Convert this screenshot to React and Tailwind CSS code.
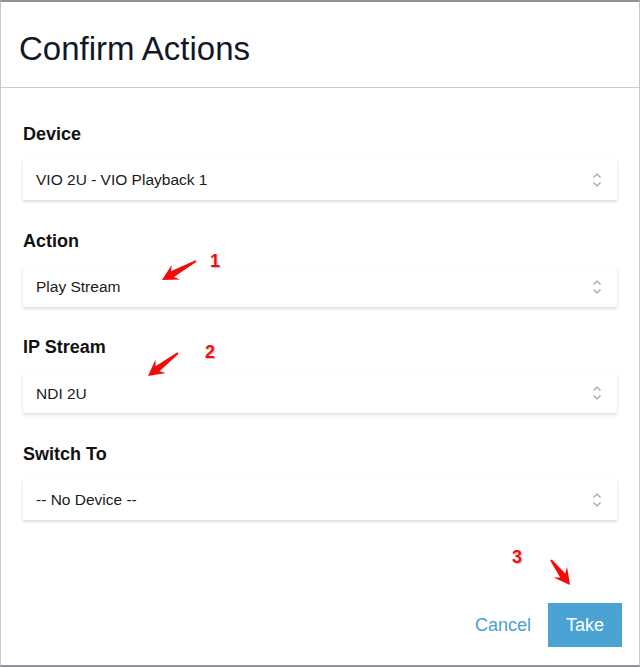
import React from 'react';

const fields = [
  { label: 'Device', value: 'VIO 2U - VIO Playback 1' },
  { label: 'Action', value: 'Play Stream' },
  { label: 'IP Stream', value: 'NDI 2U' },
  { label: 'Switch To', value: '-- No Device --' },
];

// red markup arrow, drawn from tail to tip
const Arrow = ({ from, to }) => {
  const [tx, ty] = from;
  const [px, py] = to;
  const len = Math.hypot(px - tx, py - ty);
  const dx = (px - tx) / len;
  const dy = (py - ty) / len;
  const nx = -dy;
  const ny = dx;
  const at = (d, w) => `${tx + dx * d + nx * w},${ty + dy * d + ny * w}`;
  const pts = [
    at(0, 1),
    at(len - 12, 3.2),
    at(len - 16, 8.5),
    at(len, 0),
    at(len - 16, -8.5),
    at(len - 12, -3.2),
    at(0, -1),
  ].join(' ');
  return <polygon points={pts} fill="#f50a0a" />;
};

const Chevrons = () => (
  <svg width="10" height="16" viewBox="0 0 10 16" fill="none" stroke="#9ca1ad" strokeWidth="1.2">
    <path d="M1.5 5.5 L5 2 L8.5 5.5" />
    <path d="M1.5 10.5 L5 14 L8.5 10.5" />
  </svg>
);

const Num = ({ n, className }) => (
  <span
    className={`absolute text-[18px] font-bold leading-none text-[#f20d0d] [text-shadow:0_0_1px_#fff,1px_1px_1px_#bbb] ${className}`}
  >
    {n}
  </span>
);

export default function App() {
  return (
    <div
      className="relative w-[640px] h-[667px] bg-white flex flex-col border-t-2 border-b-2 border-l border-r border-t-[#8f929c] border-b-[#8f929c] border-l-[#c4c6cc] border-r-[#c4c6cc]"
      style={{ fontFamily: '"Liberation Sans", Arial, sans-serif' }}
    >
      <div className="h-[86px] border-b border-[#c9cdd4] pl-[18px] pt-[27px]">
        <h1 className="text-[33px] leading-[40px] text-[#111827]">Confirm Actions</h1>
      </div>

      <div className="flex flex-col gap-[28.7px] px-[22px] pt-[34px]">
        {fields.map((f) => (
          <div key={f.label} className="flex flex-col">
            <div className="text-[18px] leading-[24px] font-bold text-[#111] mb-[14px]">{f.label}</div>
            <div className="h-[40px] flex items-center justify-between pl-[13px] pr-[15px] bg-white shadow-[0_2px_3px_rgba(0,0,0,0.13),0_0_1px_rgba(0,0,0,0.08)]">
              <span className="text-[15.5px] text-[#1a1a1a]">{f.value}</span>
              <Chevrons />
            </div>
          </div>
        ))}
      </div>

      <div className="mt-auto flex items-center justify-end gap-[17px] pr-[17px] pb-[18px]">
        <button className="text-[18px] text-[#4a9fd1]">Cancel</button>
        <button className="h-[44px] w-[74px] bg-[#4ba3d4] text-white text-[18px]">Take</button>
      </div>

      <svg className="absolute left-0 top-0 pointer-events-none" width="640" height="667">
        <Arrow from={[195, 259]} to={[161, 278]} />
        <Arrow from={[177, 351]} to={[147, 374]} />
        <Arrow from={[550, 558]} to={[569, 583]} />
      </svg>
      <Num n="1" className="left-[209px] top-[250px]" />
      <Num n="2" className="left-[204px] top-[341px]" />
      <Num n="3" className="left-[511px] top-[546px]" />
    </div>
  );
}
